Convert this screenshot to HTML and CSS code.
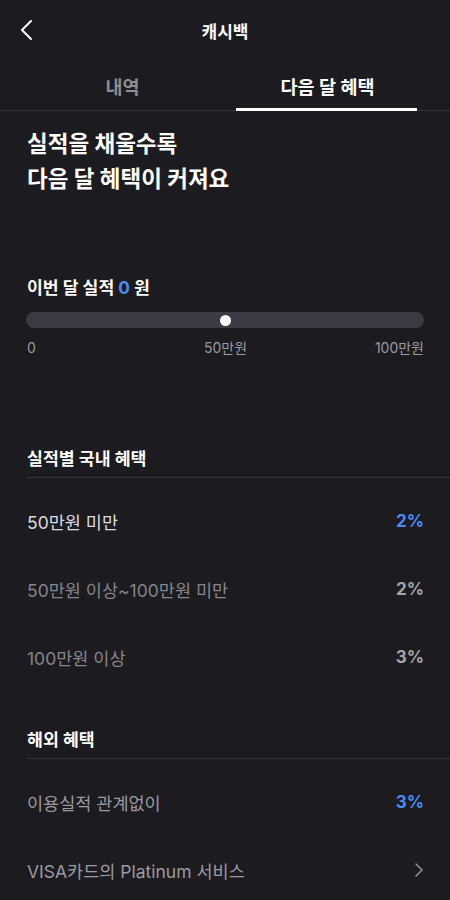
FILE: index.html
```html
<!DOCTYPE html>
<html lang="ko">
<head>
<meta charset="utf-8">
<link rel="stylesheet" href="styles.css">
</head>
<body>
<header class="topbar">
  <div class="back">
    <svg width="14" height="22" viewBox="0 0 14 22"><polyline points="11,2 2,11 11,20" fill="none" stroke="#fff" stroke-width="2" stroke-linecap="round" stroke-linejoin="round"/></svg>
  </div>
  <div class="title">캐시백</div>
  <div></div>
</header>
<nav class="tabs">
  <div class="tab">내역</div>
  <div class="tab active">다음 달 혜택</div>
</nav>
<h1 class="headline">실적을 채울수록<br>다음 달 혜택이 커져요</h1>

<div class="month">이번 달 실적 <span class="blue">0</span> 원</div>
<div class="bar"><span class="dot"></span></div>
<div class="scale"><span class="s-left">0</span><span class="s-mid">50만원</span><span class="s-right">100만원</span></div>

<div class="sec-title first">실적별 국내 혜택</div>
<div class="rows">
  <div class="row on"><span>50만원 미만</span><span class="pct blue">2%</span></div>
  <div class="row"><span>50만원 이상~100만원 미만</span><span class="pct">2%</span></div>
  <div class="row"><span>100만원 이상</span><span class="pct">3%</span></div>
</div>

<div class="sec-title">해외 혜택</div>
<div class="rows">
  <div class="row mid"><span>이용실적 관계없이</span><span class="pct blue">3%</span></div>
  <div class="row mid"><span>VISA카드의 Platinum 서비스</span>
    <svg class="chev" width="10" height="16" viewBox="0 0 10 16"><polyline points="2,2 8,8 2,14" fill="none" stroke="#8e8e93" stroke-width="1.6" stroke-linecap="round" stroke-linejoin="round"/></svg>
  </div>
</div>
</body>
</html>
```
FILE: styles.css
```css
html, body {
  margin: 0;
  padding: 0;
  background: #1c1b20;
}
body {
  font-family: "Inter", "Noto Sans CJK KR", sans-serif;
  color: #fff;
  width: 450px;
  overflow: hidden;
}
.topbar {
  height: 60px;
  display: grid;
  grid-template-columns: 60px 1fr 60px;
  align-items: center;
}
.back {
  padding-left: 20px;
  display: flex;
  align-items: center;
  height: 60px;
}
.title {
  text-align: center;
  font-size: 17px;
  font-weight: 700;
}
.tabs {
  display: grid;
  grid-template-columns: 1fr 1fr;
  padding: 0 20px;
  height: 50px;
  border-bottom: 1px solid #36353b;
}
.tab {
  position: relative;
  display: flex;
  align-items: center;
  justify-content: center;
  font-size: 18.5px;
  font-weight: 700;
  color: #8e8e93;
  padding-top: 2px;
}
.tab.active {
  color: #fff;
}
.tab.active::after {
  content: "";
  position: absolute;
  left: 11px;
  right: 13px;
  bottom: -1px;
  height: 3px;
  background: #fff;
}
.headline {
  margin: 0;
  padding: 15px 27px 0;
  font-size: 22.5px;
  line-height: 35px;
  font-weight: 700;
}
.month {
  margin: 80px 27px 0;
  font-size: 17.2px;
  line-height: 24px;
  font-weight: 700;
}
.blue {
  color: #4b8bf5;
}
.bar {
  margin: 12px 26px 0;
  height: 16px;
  border-radius: 8px;
  background: #3c3b45;
  display: flex;
  align-items: center;
  justify-content: center;
}
.dot {
  width: 11px;
  height: 11px;
  border-radius: 50%;
  background: #fff;
}
.scale {
  margin: 11px 26px 0 27px;
  display: grid;
  grid-template-columns: 1fr auto 1fr;
  font-size: 14px;
  line-height: 18px;
  color: #9a9aa0;
}
.s-mid {
  text-align: center;
}
.s-right {
  text-align: right;
}
.sec-title {
  margin: 37px 0 0 27px;
  padding-bottom: 6px;
  border-bottom: 1px solid #35343a;
  font-size: 17.3px;
  line-height: 24px;
  font-weight: 700;
}
.sec-title.first {
  margin-top: 90px;
}
.rows {
  margin-top: 9px;
}
.row {
  height: 68px;
  display: flex;
  align-items: center;
  justify-content: space-between;
  padding: 0 26px 0 27px;
  font-size: 17.5px;
  color: #85858b;
}
.row.on {
  color: #dcdce0;
}
.row.mid {
  color: #9a9aa0;
}
.pct {
  font-weight: 700;
  font-size: 17px;
  color: #a3a3a8;
}
.pct.blue {
  color: #4b8bf5;
}
```
